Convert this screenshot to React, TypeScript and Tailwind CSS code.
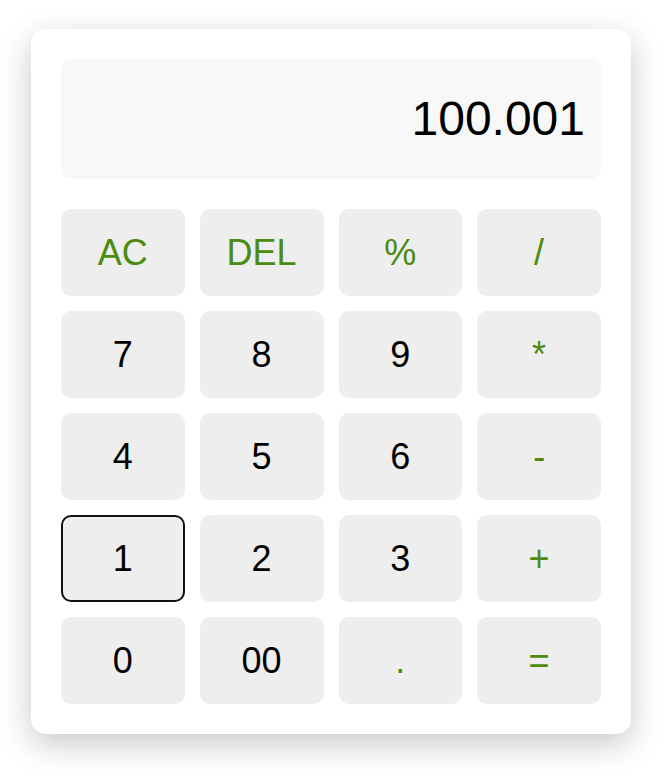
import React, { useState } from 'react';

const keys: { label: string; op?: boolean }[] = [
  { label: 'AC', op: true },
  { label: 'DEL', op: true },
  { label: '%', op: true },
  { label: '/', op: true },
  { label: '7' },
  { label: '8' },
  { label: '9' },
  { label: '*', op: true },
  { label: '4' },
  { label: '5' },
  { label: '6' },
  { label: '-', op: true },
  { label: '1' },
  { label: '2' },
  { label: '3' },
  { label: '+', op: true },
  { label: '0' },
  { label: '00' },
  { label: '.', op: true },
  { label: '=', op: true },
];

export default function App() {
  const [value] = useState('100.001');
  const focused = '1';

  return (
    <div className="min-h-screen bg-white pl-[31px] pt-[29px]" style={{ fontFamily: '"Liberation Sans", Arial, sans-serif' }}>
      <div className="w-[600px] rounded-[15px] bg-white p-[30px] shadow-[0_10px_32px_rgba(0,0,0,0.22)]">
        {/* display */}
        <div className="flex h-[120px] items-center justify-end rounded-[10px] bg-[#f8f8f8] px-[16px] text-[48px] text-black">
          {value}
        </div>

        <div className="mt-[30px] grid grid-cols-4 gap-[15px]">
          {keys.map((k) => (
            <button
              key={k.label}
              className={
                'flex h-[87px] items-center justify-center rounded-[10px] bg-[#eeeeee] text-[36px] ' +
                (k.op ? 'text-[#4b8b10] ' : 'text-black ') +
                (k.label === focused ? 'border-2 border-[#111111]' : 'border-0')
              }
            >
              {k.label}
            </button>
          ))}
        </div>
      </div>
    </div>
  );
}
